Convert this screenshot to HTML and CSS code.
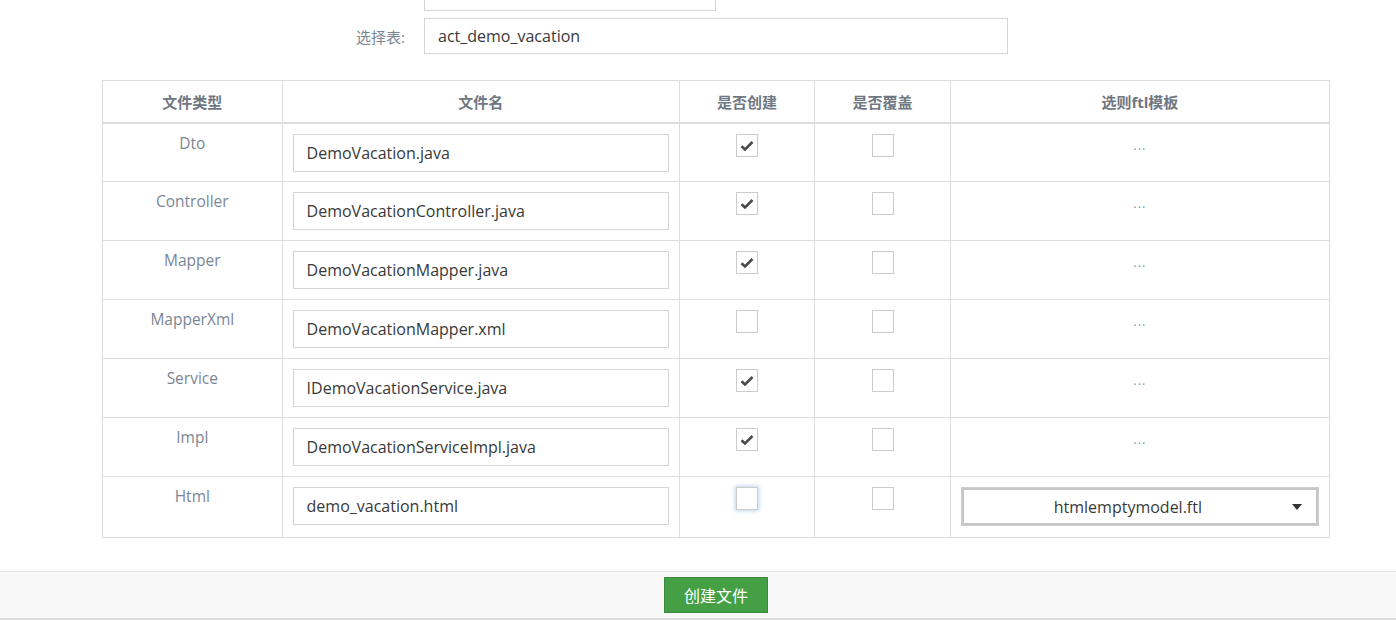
FILE: index.html
```html
<!DOCTYPE html>
<html>
<head>
<meta charset="utf-8">
<link rel="stylesheet" href="styles.css">
</head>
<body>
<div class="page">
  <div class="form">
    <div class="form-row">
      <label class="lbl"></label>
      <input class="txt short" type="text" value="">
    </div>
    <div class="form-row">
      <label class="lbl">选择表:</label>
      <input class="txt wide" type="text" value="act_demo_vacation">
    </div>
  </div>

  <table class="grid">
    <thead>
      <tr>
        <th class="c1">文件类型</th>
        <th class="c2">文件名</th>
        <th class="c3">是否创建</th>
        <th class="c4">是否覆盖</th>
        <th class="c5">选则ftl模板</th>
      </tr>
    </thead>
    <tbody>
      <tr>
        <td class="type">Dto</td>
        <td><input class="txt cell" type="text" value="DemoVacation.java"></td>
        <td><span class="chk on"><svg viewBox="0 0 14 12" width="14" height="12"><path d="M1.5 6.2 L5 9.5 L12.5 2" fill="none" stroke="#4b4b4b" stroke-width="2.6"/></svg></span></td>
        <td><span class="chk"></span></td>
        <td class="dots">...</td>
      </tr>
      <tr>
        <td class="type">Controller</td>
        <td><input class="txt cell" type="text" value="DemoVacationController.java"></td>
        <td><span class="chk on"><svg viewBox="0 0 14 12" width="14" height="12"><path d="M1.5 6.2 L5 9.5 L12.5 2" fill="none" stroke="#4b4b4b" stroke-width="2.6"/></svg></span></td>
        <td><span class="chk"></span></td>
        <td class="dots">...</td>
      </tr>
      <tr>
        <td class="type">Mapper</td>
        <td><input class="txt cell" type="text" value="DemoVacationMapper.java"></td>
        <td><span class="chk on"><svg viewBox="0 0 14 12" width="14" height="12"><path d="M1.5 6.2 L5 9.5 L12.5 2" fill="none" stroke="#4b4b4b" stroke-width="2.6"/></svg></span></td>
        <td><span class="chk"></span></td>
        <td class="dots">...</td>
      </tr>
      <tr>
        <td class="type">MapperXml</td>
        <td><input class="txt cell" type="text" value="DemoVacationMapper.xml"></td>
        <td><span class="chk"></span></td>
        <td><span class="chk"></span></td>
        <td class="dots">...</td>
      </tr>
      <tr>
        <td class="type">Service</td>
        <td><input class="txt cell" type="text" value="IDemoVacationService.java"></td>
        <td><span class="chk on"><svg viewBox="0 0 14 12" width="14" height="12"><path d="M1.5 6.2 L5 9.5 L12.5 2" fill="none" stroke="#4b4b4b" stroke-width="2.6"/></svg></span></td>
        <td><span class="chk"></span></td>
        <td class="dots">...</td>
      </tr>
      <tr>
        <td class="type">Impl</td>
        <td><input class="txt cell" type="text" value="DemoVacationServiceImpl.java"></td>
        <td><span class="chk on"><svg viewBox="0 0 14 12" width="14" height="12"><path d="M1.5 6.2 L5 9.5 L12.5 2" fill="none" stroke="#4b4b4b" stroke-width="2.6"/></svg></span></td>
        <td><span class="chk"></span></td>
        <td class="dots">...</td>
      </tr>
      <tr class="last">
        <td class="type">Html</td>
        <td><input class="txt cell" type="text" value="demo_vacation.html"></td>
        <td><span class="chk focus"></span></td>
        <td><span class="chk"></span></td>
        <td class="sel-cell">
          <div class="select"><span class="sel-text">htmlemptymodel.ftl</span><svg class="caret" viewBox="0 0 10 6" width="10" height="6"><path d="M0 0 H10 L5 6 Z" fill="#333"/></svg></div>
        </td>
      </tr>
    </tbody>
  </table>
</div>

<div class="footer">
  <div class="footer-inner">
    <button class="btn-create" type="button">创建文件</button>
  </div>
</div>
</body>
</html>
```

FILE: styles.css
```css
html, body {
  margin: 0;
  padding: 0;
  background: #fff;
  font-family: "Open Sans", "Noto Sans CJK SC", sans-serif;
  font-size: 13px;
  color: #393939;
}

.page {
  padding-left: 102px;
  width: 1228px;
}

.form {
  margin-top: -25px;
  display: flex;
  flex-direction: column;
  gap: 7px;
}

.form-row {
  display: flex;
  align-items: center;
}

.lbl {
  width: 303px;
  text-align: right;
  padding-right: 19px;
  color: #7b8693;
  font-size: 15px;
}

.txt {
  box-sizing: border-box;
  height: 36px;
  border: 1px solid #d5d5d5;
  background: #fff;
  font-family: "Open Sans", "Noto Sans CJK SC", sans-serif;
  font-size: 16px;
  color: #393939;
  padding: 0 13px;
  margin: 0;
  outline: none;
  border-radius: 0;
}

.short { width: 292px; }
.wide { width: 584px; }

.grid {
  margin-top: 26px;
  width: 1228px;
  border-collapse: collapse;
  table-layout: fixed;
}

.grid th, .grid td {
  border: 1px solid #dddddd;
  text-align: center;
  vertical-align: top;
}

.grid th {
  height: 42px;
  box-sizing: border-box;
  vertical-align: middle;
  font-weight: bold;
  font-size: 15px;
  color: #6f7782;
  border-bottom: 2px solid #dddddd;
  padding: 0;
}

.c1 { width: 179px; }
.c2 { width: 396px; }
.c3 { width: 135px; }
.c4 { width: 135px; }
.c5 { width: 378px; }

.grid td {
  height: 59px;
  box-sizing: border-box;
  padding: 10px 10px 0;
}

.grid tr.last td {
  height: 61px;
}

.grid td.type {
  color: #7b8693;
  font-size: 15.5px;
  padding-top: 8px;
}

.txt.cell {
  width: 376px;
  height: 38px;
  display: block;
}

.chk {
  display: inline-block;
  box-sizing: border-box;
  width: 22px;
  height: 23px;
  border: 1px solid #cccccc;
  background: #fff;
  position: relative;
  vertical-align: top;
}

.chk svg {
  position: absolute;
  left: 3px;
  top: 5px;
}

.chk.focus {
  box-shadow: 0 0 4px 1px rgba(110, 160, 220, 0.45);
}

.grid td.dots {
  color: #8a95a2;
  font-size: 13px;
  padding-top: 12px;
  letter-spacing: 1px;
}

.select {
  box-sizing: border-box;
  height: 39px;
  border: 1px solid #cfcfcf;
  box-shadow: inset 0 0 0 2px #c6c6c6, inset 0 0 0 3px #fff;
  display: flex;
  align-items: center;
  justify-content: center;
  padding-right: 24px;
  position: relative;
  font-size: 16px;
  color: #393939;
  background: #fff;
}

.caret {
  position: absolute;
  right: 16px;
  top: 16px;
}

.footer {
  margin-top: 33px;
  height: 46px;
  background: #f8f8f8;
  border-top: 1px solid #e5e5e5;
  border-bottom: 2px solid #dcdcdc;
  padding-left: 102px;
}

.footer-inner {
  width: 1228px;
  display: flex;
  justify-content: center;
  padding-top: 5px;
}

.btn-create {
  width: 104px;
  height: 36px;
  background: #45a045;
  border: 1px solid #3a8a3a;
  color: #fff;
  font-family: "Noto Sans CJK SC", "Open Sans", sans-serif;
  font-size: 16px;
  padding: 0;
  margin: 0;
  border-radius: 0;
}
```
